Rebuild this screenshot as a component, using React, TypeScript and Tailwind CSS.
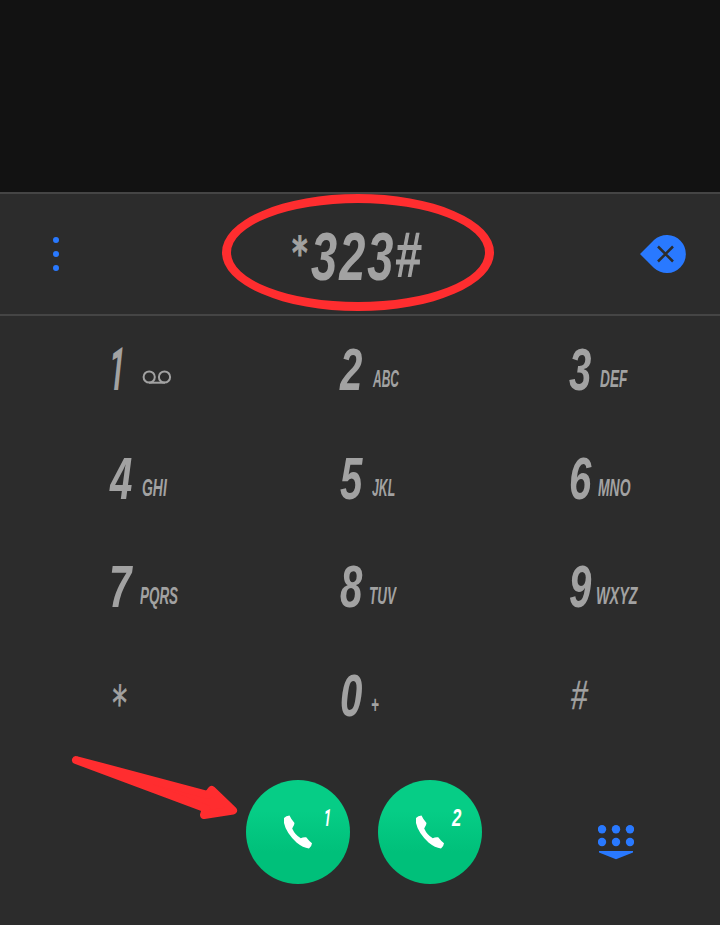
import { clsx } from 'clsx';

type Key = { digit: string; digitClass?: string; sub?: string; subClass?: string };

const KEYS: Key[] = [
  { digit: '1', digitClass: "-ml-px -skew-x-3 scale-x-[0.48] font-['Roboto']" },
  { digit: '2', sub: 'ABC', subClass: 'ml-[33px] scale-x-[0.5]' },
  { digit: '3', sub: 'DEF', subClass: 'ml-[31px] scale-x-[0.57]' },
  { digit: '4', sub: 'GHI', subClass: 'ml-[32px] scale-x-[0.58]' },
  { digit: '5', sub: 'JKL', subClass: 'ml-[32px] scale-x-[0.51]' },
  { digit: '6', sub: 'MNO', subClass: 'ml-[29px] scale-x-[0.58]' },
  { digit: '7', digitClass: '-ml-px', sub: 'PQRS', subClass: 'ml-[31px] scale-x-[0.56]' },
  { digit: '8', sub: 'TUV', subClass: 'ml-[29px] scale-x-[0.56]' },
  { digit: '9', sub: 'WXYZ', subClass: 'ml-[27px] scale-x-[0.6]' },
  { digit: '*' },
  { digit: '0', sub: '+', subClass: 'ml-[31px] scale-x-[0.56]' },
  { digit: '#' },
];

function Voicemail() {
  return (
    <svg className="ml-[33px] mt-[30px] h-[15px] w-[30px]" viewBox="0 0 30 15" fill="none" stroke="#a2a2a2" strokeWidth="2">
      <circle cx="7.2" cy="7" r="5.6" />
      <circle cx="22.5" cy="7" r="5.6" />
      <path d="M7 12.7h16" />
    </svg>
  );
}

function DialKey({ digit, digitClass, sub, subClass }: Key) {
  if (digit === '*') {
    return (
      <div className="pt-[37px] pl-[2px]">
        <span className="block w-[24px] origin-left -skew-x-3 scale-x-[0.62] font-['DejaVu_Sans'] text-[48px] leading-none [-webkit-text-stroke:0.7px]">*</span>
      </div>
    );
  }
  if (digit === '#') {
    return (
      <div className="pt-[33px] pl-[2px]">
        <span className="block w-[22px] origin-left -skew-x-6 scale-x-[0.72] text-[41px] leading-none [-webkit-text-stroke:0.5px]">#</span>
      </div>
    );
  }
  return (
    <div className="flex items-start pt-6">
      <span className={clsx('block w-0 origin-left text-[60px] leading-none font-bold', digitClass, digit !== '1' && 'scale-x-[0.67]')}>{digit}</span>
      {digit === '1' && <Voicemail />}
      {sub && <span className={clsx('mt-[27px] block origin-left text-[24px] leading-none font-bold', subClass)}>{sub}</span>}
    </div>
  );
}

function CallButton({ sim }: { sim: string }) {
  return (
    <button className="flex h-[104px] w-[104px] rounded-full bg-linear-to-b from-[#06cd86] from-30% to-[#00c07a] to-70% text-white">
      <svg className="mt-[35px] ml-[37px] h-[34px] w-[30px] shrink-0" viewBox="0 0 30 34" fill="currentColor">
        <path d="M1 3 Q3 .5 6.5 .5 Q8 4 11.5 8 Q11.5 10 9.2 13.5 Q12 20 17.8 23.2 Q20 22 23.2 22.3 Q26 26 29 28.2 Q28.5 32 26 33.5 Q20 32.8 13.5 27.5 Q3 17.5 1 8 Z" />
      </svg>
      <span
        className={clsx(
          'mt-[26px] block origin-left text-[24px] leading-none',
          sim === '1' ? "ml-[10px] -skew-x-3 scale-x-[0.55] font-['Roboto'] font-bold" : 'ml-[7px] scale-x-[0.7] font-bold'
        )}
      >
        {sim}
      </span>
    </button>
  );
}

export default function App() {
  return (
    <main className="relative flex h-[925px] w-[720px] flex-col overflow-hidden bg-[#2c2c2c] font-['Liberation_Sans',sans-serif] text-[#a2a2a2]">
      <div className="h-[192px] bg-[#121212]" />

      <header className="flex h-[124px] items-start border-y-2 border-[#454545] italic">
        <div className="mt-[43px] ml-[53px] flex w-[6px] flex-col gap-2">
          <i className="h-[6px] rounded-full bg-[#2979ff]" />
          <i className="h-[6px] rounded-full bg-[#2979ff]" />
          <i className="h-[6px] rounded-full bg-[#2979ff]" />
        </div>
        <div className="ml-[232px] flex w-[140px] items-start leading-none">
          <span className="mt-[37px] ml-px w-[19px] origin-left scale-x-[0.68] font-['DejaVu_Sans'] text-[44px] font-bold [-webkit-text-stroke:0.8px]">*</span>
          <span className="mt-[28px] w-[85px] origin-left scale-x-[0.69] text-[68px] font-bold tracking-[3px]">323</span>
          <span className="mt-[30px] w-[36px] origin-left -skew-x-3 scale-x-[0.7] text-[62px] [-webkit-text-stroke:1.8px]">#</span>
        </div>
        <svg className="mt-[40px] ml-[209px] h-[40px] w-[46px]" viewBox="0 0 46 40" fill="none">
          <path d="M0 20 L14 6 A19 19 0 1 1 14 34 Z" fill="#2979ff" />
          <path d="M18 12.5 L33 27.5 M33 12.5 L18 27.5" stroke="#2c2c2c" strokeWidth="2.5" />
        </svg>
      </header>

      <section className="grid h-[434px] grid-cols-[230px_229px_151px] grid-rows-4 pl-[110px] italic">
        {KEYS.map((key) => (
          <DialKey key={key.digit} {...key} />
        ))}
      </section>

      <footer className="flex items-start gap-7 pt-[30px] pl-[246px] italic">
        <CallButton sim="1" />
        <CallButton sim="2" />
        <svg className="mt-[44px] ml-[88px] h-[36px] w-[36px]" viewBox="0 0 36 36" fill="#2979ff">
          {[4, 18, 32].map((x) => (
            <g key={x}>
              <circle cx={x} cy="5.3" r="4.2" />
              <circle cx={x} cy="18" r="4.2" />
            </g>
          ))}
          <path d="M1 27H35V28.5L18 35.3L1 28.5Z" />
        </svg>
      </footer>

      {/* Hand-drawn annotations over the dialer */}
      <div className="absolute top-[194px] left-[222px] h-[117px] w-[272px] rounded-[50%] border-[9px] border-[#ff2d2f]" />
      <svg className="absolute top-[750px] left-[66px] h-[75px] w-[176px]" viewBox="0 0 176 75">
        <path
          d="M10 10 L142 45 L145.7 40 L167 60.5 L138 65 L140 58.5 Z"
          fill="#ff2d2f"
          stroke="#ff2d2f"
          strokeWidth="8"
          strokeLinejoin="round"
        />
      </svg>
    </main>
  );
}
